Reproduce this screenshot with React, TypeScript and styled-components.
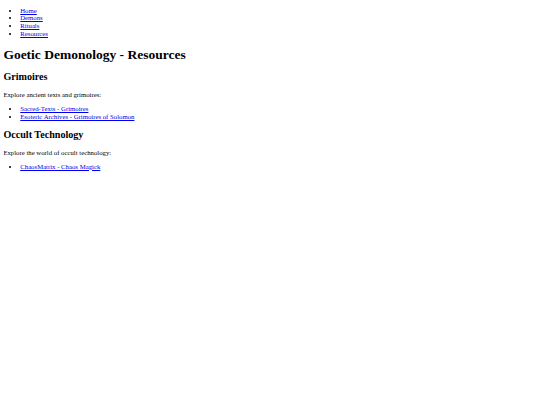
import React from 'react';
import styled, { createGlobalStyle } from 'styled-components';

// the reference is a default-styled 1280px page shrunk to 540px, so the
// browser defaults below are scaled down to match
const GlobalStyle = createGlobalStyle`
  html {
    background: #ffffff;
  }
  body {
    margin: 0 3.375px 3.375px;
    font-family: 'Liberation Serif', 'Times New Roman', serif;
    font-size: 6.75px;
    line-height: 7.7px;
    color: #000000;
  }
`;

const List = styled.ul<{ $top?: number }>`
  margin: ${(p) => (p.$top !== undefined ? p.$top : 6.6)}px 0 6.6px;
  padding-left: 16.875px;
  list-style: disc;
`;

const Item = styled.li`
  line-height: 7.75px;
`;

const Link = styled.a`
  color: #0000ee;
  text-decoration: underline;
  text-decoration-thickness: 0.5px;
  text-underline-offset: 0.8px;
`;

const Title = styled.h1`
  font-size: 13.5px;
  line-height: 15.5px;
  font-weight: bold;
  margin: 9px 0;
`;

const SectionTitle = styled.h2`
  font-size: 10.125px;
  line-height: 11.6px;
  font-weight: bold;
  margin: 8.2px 0;
`;

const Text = styled.p`
  margin: 6.6px 0;
`;

const nav = ['Home', 'Demons', 'Rituals', 'Resources'];

const sections = [
  {
    title: 'Grimoires',
    intro: 'Explore ancient texts and grimoires:',
    links: ['Sacred-Texts - Grimoires', 'Esoteric Archives - Grimoires of Solomon'],
  },
  {
    title: 'Occult Technology',
    intro: 'Explore the world of occult technology:',
    links: ['ChaosMatrix - Chaos Magick'],
  },
];

const App = () => {
  return (
    <>
      <GlobalStyle />
      <nav>
        <List $top={6.6}>
          {nav.map((label) => (
            <Item key={label}>
              <Link href="#">{label}</Link>
            </Item>
          ))}
        </List>
      </nav>
      <Title>Goetic Demonology - Resources</Title>
      {sections.map((section) => (
        <section key={section.title}>
          <SectionTitle>{section.title}</SectionTitle>
          <Text>{section.intro}</Text>
          <List>
            {section.links.map((label) => (
              <Item key={label}>
                <Link href="#">{label}</Link>
              </Item>
            ))}
          </List>
        </section>
      ))}
    </>
  );
};

export default App;
